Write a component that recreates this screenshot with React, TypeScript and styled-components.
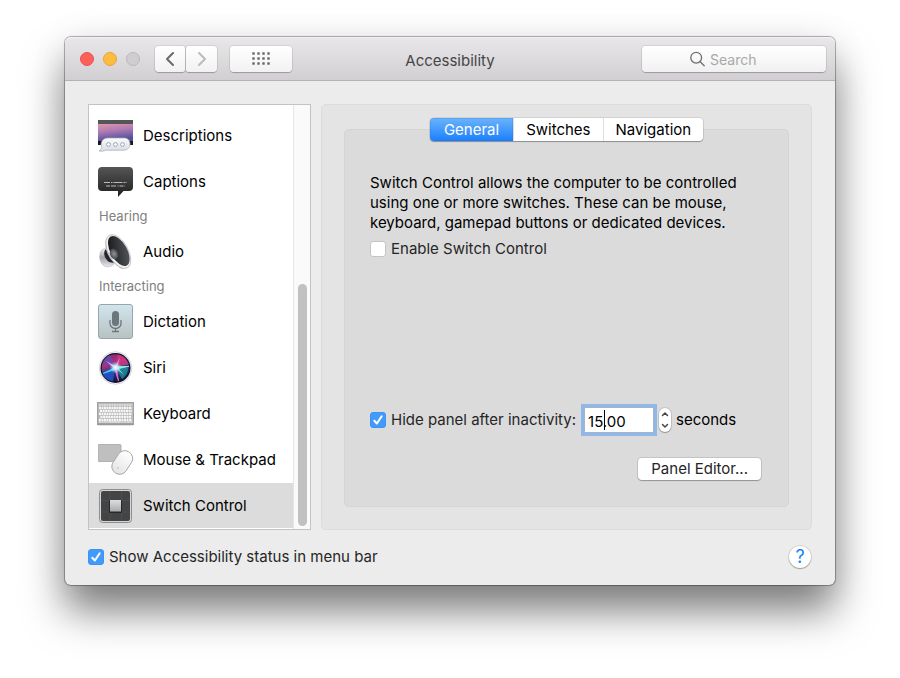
import React, { useId } from 'react';
import styled, { createGlobalStyle } from 'styled-components';

const GlobalStyle = createGlobalStyle`
  *, *::before, *::after { box-sizing: border-box; }
  body { margin: 0; background: #fff; color: #000; font: 400 15px/20px Inter, "Liberation Sans", sans-serif; }
  button, input { font: inherit; color: inherit; }
  svg { display: block; }
`;

const Desktop = styled.main`
  display: flex;
  flex-direction: column;
  min-height: 100vh;
  padding: 37px 65px 93px;
  background: #fff;
  overflow: hidden;
`;

const Window = styled.section`
  flex: 1;
  display: flex;
  flex-direction: column;
  border-radius: 6px;
  background: #ececec;
  box-shadow: 0 0 0 1px rgba(0, 0, 0, 0.24), 0 0 2px rgba(0, 0, 0, 0.25), 0 26px 40px rgba(0, 0, 0, 0.5), 0 0 40px rgba(0, 0, 0, 0.06);
`;

const TitleBar = styled.header`
  display: grid;
  grid-template-columns: 1fr auto 1fr;
  align-items: center;
  height: 44px;
  padding: 0 9px;
  border-radius: 6px 6px 0 0;
  border-bottom: 1px solid #b4b2b4;
  background: linear-gradient(#e9e7e9, #d1cfd1);
  box-shadow: inset 0 1px 0 #f3f2f3;
`;

const Title = styled.h1`
  margin: 0;
  padding-top: 4px;
  font-size: 15px;
  font-weight: 400;
  color: #464546;
`;

const ToolGroup = styled.div`
  display: flex;
  align-items: center;
  gap: 13px;
`;

const Lights = styled.div`
  display: flex;
  gap: 9px;
  padding: 0 2px 0 6px;
`;

const Light = styled.button<{ $fill: string; $ring: string }>`
  width: 14px;
  height: 14px;
  padding: 0;
  border: 1px solid ${(p) => p.$ring};
  border-radius: 50%;
  background: ${(p) => p.$fill};
`;

const NavPair = styled.div`
  display: flex;
  gap: 1px;
`;

const ToolButton = styled.button<{ $w: number; $corners?: string }>`
  display: grid;
  place-items: center;
  width: ${(p) => p.$w}px;
  height: 26px;
  padding: 0;
  border: 0;
  border-radius: ${(p) => p.$corners ?? '4px'};
  background: linear-gradient(#fff, #f3f2f3);
  box-shadow: 0 0 0 1px rgba(0, 0, 0, 0.07), 0 1px 1px rgba(0, 0, 0, 0.22);
`;

const SearchBox = styled.label`
  justify-self: end;
  display: flex;
  align-items: center;
  gap: 5px;
  width: 184px;
  height: 26px;
  padding-left: 48px;
  border-radius: 4px;
  background: linear-gradient(#fff, #f1f1f1);
  box-shadow: 0 0 0 1px rgba(0, 0, 0, 0.07), 0 1px 1px rgba(0, 0, 0, 0.22);
`;

const SearchInput = styled.input`
  flex: 1;
  min-width: 0;
  padding: 2px 0 0;
  border: 0;
  outline: 0;
  background: transparent;
  font-size: 14px;
  &::placeholder { color: #a9a9a9; opacity: 1; }
`;

const Body = styled.div`
  flex: 1;
  display: flex;
  flex-direction: column;
  padding: 23px 23px 16px;
`;

const Columns = styled.div`
  flex: 1;
  display: grid;
  grid-template-columns: 223px 1fr;
  gap: 10px;
`;

const Sidebar = styled.nav`
  display: grid;
  grid-template-columns: 1fr 17px;
  border: 1px solid #c3c3c3;
  background: #fff;
`;

const List = styled.div`
  padding-top: 8px;
`;

const GroupTitle = styled.h2`
  margin: 0;
  padding: 0 0 2px 10px;
  font-size: 13px;
  line-height: 22px;
  font-weight: 400;
  color: #808080;
`;

const Item = styled.button<{ $selected?: boolean }>`
  display: flex;
  align-items: center;
  gap: 9px;
  width: 100%;
  height: 46px;
  padding: 1px 9px 0;
  border: 0;
  border-bottom: 1px solid #fff;
  background: ${(p) => (p.$selected ? '#dcdcdc' : '#fff')};
  text-align: left;
`;

const ScrollTrack = styled.div`
  display: flex;
  flex-direction: column;
  justify-content: flex-end;
  padding: 3px;
  border-left: 1px solid #e6e6e6;
  background: #fafafa;
`;

const ScrollThumb = styled.div`
  width: 9px;
  height: 58%;
  margin-left: 1px;
  border-radius: 5px;
  background: #c1c1c1;
`;

const Panel = styled.section`
  display: flex;
  flex-direction: column;
  padding: 13px 22px 22px;
  border: 1px solid #dcdcdc;
  border-radius: 5px;
  background: #e4e4e4;
`;

const Tabs = styled.div`
  z-index: 1;
  align-self: center;
  display: flex;
  height: 23px;
  margin-bottom: -12px;
  border-radius: 4px;
  background: #fff;
  box-shadow: 0 0 0 1px rgba(0, 0, 0, 0.08), 0 1px 1px rgba(0, 0, 0, 0.3);
`;

const Tab = styled.button<{ $active?: boolean }>`
  padding: 0 12px;
  border: 0;
  border-left: 1px solid #dedede;
  background: transparent;
  &:first-child { border-left: 0; padding: 0 14px; }
  &:last-child { border-radius: 0 4px 4px 0; }
  ${(p) =>
    p.$active &&
    `
    border-radius: 4px 0 0 4px;
    background: linear-gradient(#6cb3fa, #1a80fe);
    box-shadow: inset 0 0 0 1px rgba(20, 110, 240, 0.2);
    color: #fff;
  `}
`;

const Group = styled.div`
  flex: 1;
  display: flex;
  flex-direction: column;
  padding: 43px 27px 26px 25px;
  border: 1px solid #d4d4d4;
  border-radius: 5px;
  background: #dbdbdb;
`;

const Intro = styled.p`
  max-width: 385px;
  margin: 0 0 6px;
`;

const CheckLabel = styled.label`
  align-self: flex-start;
  display: inline-flex;
  align-items: center;
  gap: 5px;
  color: #262626;
`;

const CheckCell = styled.span`
  display: grid;
  place-items: center;
  > * { grid-area: 1 / 1; }
  > svg { pointer-events: none; }
`;

const CheckInput = styled.input`
  appearance: none;
  width: 16px;
  height: 16px;
  margin: 0;
  border: 1px solid #c4c4c4;
  border-radius: 3px;
  background: #fff;
  &:checked { border-color: #3b93f5; background: #429bfb; }
  & + svg { visibility: hidden; }
  &:checked + svg { visibility: visible; }
`;

const DelayRow = styled.div`
  display: flex;
  align-items: center;
  height: 34px;
  margin-top: auto;
  ${CheckLabel} { align-self: center; }
`;

const Field = styled.div`
  position: relative;
  margin: 0 5px 0 8px;
`;

const DelayInput = styled.input`
  display: block;
  width: 70px;
  height: 26px;
  padding: 3px 3px 0;
  border: 1px solid #a9b4c4;
  border-radius: 0;
  outline: 0;
  background: #fff;
  box-shadow: 0 0 0 3px #8db8e9;
  caret-color: transparent;
`;

const Caret = styled.span`
  position: absolute;
  left: 20px;
  top: 3px;
  width: 1px;
  height: 20px;
  background: #000;
`;

const Stepper = styled.div`
  display: flex;
  flex-direction: column;
  width: 12px;
  margin-right: 5px;
  border-radius: 6px;
  background: #fff;
  box-shadow: 0 0 0 1px rgba(0, 0, 0, 0.1), 0 1px 1px rgba(0, 0, 0, 0.25);
`;

const StepButton = styled.button`
  display: grid;
  place-items: center;
  height: 12px;
  padding: 0;
  border: 0;
  background: transparent;
`;

const PushButton = styled.button`
  align-self: flex-end;
  height: 22px;
  margin-top: 21px;
  padding: 0 13px;
  border: 0;
  border-radius: 4px;
  background: #fff;
  box-shadow: 0 0 0 1px rgba(0, 0, 0, 0.1), 0 1px 1px rgba(0, 0, 0, 0.25);
  color: #262626;
`;

const Footer = styled.footer`
  display: flex;
  justify-content: space-between;
  align-items: center;
  height: 24px;
  margin-top: 15px;
  padding-right: 1px;
  ${CheckLabel} { align-self: center; }
`;

const HelpButton = styled.button`
  width: 22px;
  height: 22px;
  padding: 0;
  border: 0;
  border-radius: 50%;
  background: #fff;
  box-shadow: 0 0 0 1px rgba(0, 0, 0, 0.1), 0 1px 1px rgba(0, 0, 0, 0.25);
  color: #1482fb;
  font-size: 18px;
`;

function CheckBox({ label, checked }: { label: string; checked?: boolean }) {
  return (
    <CheckLabel>
      <CheckCell>
        <CheckInput type="checkbox" defaultChecked={checked} />
        <svg width="16" height="16" viewBox="0 0 16 16" fill="none" stroke="#fff" strokeWidth="2" strokeLinecap="round" strokeLinejoin="round">
          <path d="M4.3 8.7 6.9 11.5 11.7 4.3" />
        </svg>
      </CheckCell>
      {label}
    </CheckLabel>
  );
}

function DescriptionsIcon() {
  return (
    <svg width="36" height="36" viewBox="0 0 36 36">
      <defs>
        <linearGradient id="sky" x1="0" y1="0" x2="0.25" y2="1">
          <stop offset="0" stopColor="#e295a9" />
          <stop offset="0.45" stopColor="#b07bb4" />
          <stop offset="1" stopColor="#554f9b" />
        </linearGradient>
        <linearGradient id="bubble" x1="0" y1="0" x2="0" y2="1">
          <stop offset="0" stopColor="#fafbfc" />
          <stop offset="1" stopColor="#d9dce5" />
        </linearGradient>
      </defs>
      <path d="M0 2h35v25H0z" fill="#17181c" />
      <path d="M0 2h35v4H0z" fill="#525756" />
      <path d="M0 6h35v17H0z" fill="url(#sky)" />
      <path d="M10 20h16c4 0 6 2.600 6 6s-2.500 6.200-6 6.200H8c-2 .9-4.500 1.200-7 .8 1.500-.8 2.600-2 2.900-3.200C1.700 25 4.500 20 10 20z" fill="url(#bubble)" stroke="#a5a9b8" strokeWidth=".7" />
      <g fill="#fff" stroke="#a0a2ad" strokeWidth="1">
        <circle cx="10.500" cy="26.500" r="1.900" />
        <circle cx="17.500" cy="26.500" r="1.900" />
        <circle cx="24.500" cy="26.500" r="1.900" />
      </g>
    </svg>
  );
}

function CaptionsIcon() {
  return (
    <svg width="36" height="36" viewBox="0 0 36 36">
      <defs>
        <linearGradient id="caption" x1="0" y1="0" x2="0" y2="1">
          <stop offset="0" stopColor="#555" />
          <stop offset="1" stopColor="#1f1f1f" />
        </linearGradient>
      </defs>
      <path d="M4 3h27q4 0 4 4v16q0 4-4 4h-5.500L20 33v-6H4q-4 0-4-4V7q0-4 4-4z" fill="url(#caption)" />
      <g stroke="#bcbcbc" strokeWidth="1">
        <path d="M6 18.500h23" strokeDasharray="6 1 1.500 1 9 1 2 1" />
        <path d="M8 22h19" strokeDasharray="4 1 5 1.500 1 1" />
      </g>
    </svg>
  );
}

function AudioIcon() {
  return (
    <svg width="36" height="36" viewBox="0 0 36 36">
      <defs>
        <linearGradient id="magnet" x1="0" y1="0" x2="0" y2="1">
          <stop offset="0" stopColor="#f2f2f6" />
          <stop offset=".5" stopColor="#a3a3ae" />
          <stop offset="1" stopColor="#e9e9ee" />
        </linearGradient>
        <linearGradient id="cone" x1="0" y1="0" x2="1" y2="0.8">
          <stop offset="0" stopColor="#111" />
          <stop offset="1" stopColor="#55575a" />
        </linearGradient>
        <radialGradient id="dome">
          <stop offset="0" stopColor="#909599" />
          <stop offset="1" stopColor="#45484c" />
        </radialGradient>
      </defs>
      <path d="M3 17c2-3 6-3 8-1l5 14c-3 3-8 4-11 1-4-4-4-10-2-14z" fill="url(#magnet)" stroke="#a9a9b2" strokeWidth=".5" />
      <path d="M7 16l4-3 5 16-5-1C7 25 5 20 7 16z" fill="#25262a" />
      <path d="M8.500 4c-4 9 2 23 15 31l5-2C15 25 9 14 12 1z" fill="#c6c6ce" />
      <ellipse cx="20.300" cy="17.600" rx="9.800" ry="18.600" transform="rotate(-29 20.300 17.600)" fill="#f1f1f4" stroke="#aaaab1" strokeWidth=".6" />
      <ellipse cx="20.800" cy="17" rx="8.300" ry="16.600" transform="rotate(-29 20.800 17)" fill="url(#cone)" />
      <ellipse cx="16" cy="20" rx="4" ry="5.500" transform="rotate(-20 16 20)" fill="url(#dome)" />
    </svg>
  );
}

function DictationIcon() {
  return (
    <svg width="36" height="36" viewBox="0 0 36 36">
      <defs>
        <linearGradient id="dictation" x1="0" y1="0" x2="0" y2="1">
          <stop offset="0" stopColor="#d2e5ed" />
          <stop offset="1" stopColor="#b7c1c2" />
        </linearGradient>
      </defs>
      <rect x=".5" y=".5" width="34" height="34" rx="2.500" fill="url(#dictation)" stroke="#98a5a9" />
      <rect x="14" y="7" width="7" height="15" rx="3.500" fill="#6b777b" />
      <path d="M12 16v3.500a5.500 5 0 0 0 11 0V16M17.500 24.500V27M14 27.500h7" fill="none" stroke="#6b777b" strokeWidth="1.300" />
    </svg>
  );
}

function SiriIcon() {
  return (
    <svg width="36" height="36" viewBox="0 0 36 36">
      <defs>
        <linearGradient id="orb" x1="0.2" y1="0" x2="0.5" y2="1">
          <stop offset="0" stopColor="#7b2a6e" />
          <stop offset=".35" stopColor="#b0307f" />
          <stop offset=".6" stopColor="#2a3f92" />
          <stop offset="1" stopColor="#14123a" />
        </linearGradient>
        <radialGradient id="glow">
          <stop offset="0" stopColor="#fff" />
          <stop offset=".4" stopColor="#cdf3ff" stopOpacity=".8" />
          <stop offset="1" stopColor="#8fd8ff" stopOpacity="0" />
        </radialGradient>
      </defs>
      <circle cx="17.500" cy="18" r="16.300" fill="#f3f3f3" stroke="#cfcfcf" strokeWidth=".8" />
      <circle cx="17.500" cy="18" r="15" fill="#10102a" />
      <circle cx="17.500" cy="18" r="13.800" fill="url(#orb)" />
      <path d="M17 17 4.500 13C6 9 9 6 12 5z" fill="#5b54b5" opacity=".7" />
      <path d="M17 17 20 4.500c5 1 9 5 10.500 10z" fill="#d23a7c" opacity=".75" />
      <path d="M17 17 5 25c3 4 6 6 10 6.500z" fill="#2158d2" opacity=".8" />
      <path d="M17 17 30 18c0 5-3 9-6 11z" fill="#1aa29b" opacity=".7" />
      <path d="M17 17.500 5 23.500 17 19.500z" fill="#45d7ff" stroke="#45d7ff" strokeWidth=".8" />
      <path d="M17 16.500 31 16.500 18 19z" fill="#8ff5de" stroke="#8ff5de" strokeWidth=".8" />
      <path d="M16 17 20.500 31 18.500 17z" fill="#ff78d2" stroke="#f06ac8" strokeWidth=".8" />
      <path d="M16 18 8 11 18 16.500zM17 17 22 8 18.500 18z" fill="#f2b9ef" />
      <path d="M17 17 26 25 19 17z" fill="#b9fff0" />
      <circle cx="17.500" cy="17.500" r="6" fill="url(#glow)" />
    </svg>
  );
}

function KeyboardIcon() {
  return (
    <svg width="36" height="36" viewBox="1 0 36 36" overflow="visible">
      <rect x="0" y="8" width="37" height="21" fill="#c9c9c9" />
      <rect x=".5" y="6.500" width="36" height="21" fill="#b9b9b9" stroke="#a0a0a0" />
      <g stroke="#f8f8f8">
        <path d="M2 9h33" strokeWidth="1" strokeDasharray="2 .5" />
        <path d="M2 11.800h33M2 17.800h33M2 23.800h33" strokeWidth="2.200" strokeDasharray="1.900 .6" />
        <path d="M3 14.800h32M3.500 20.800h31" strokeWidth="2.200" strokeDasharray="2 .6" />
        <path d="M2 26h33" strokeWidth="1" strokeDasharray="2 .6 2 .6 3 .6 13 .6" />
      </g>
      <path d="M0 28.500h37" stroke="#989898" />
      <path d="M1 29.500h35" stroke="#e2e2e2" />
    </svg>
  );
}

function MouseIcon() {
  return (
    <svg width="36" height="36" viewBox="0 0 36 36">
      <defs>
        <linearGradient id="mouse" x1="0" y1="0" x2="0" y2="1">
          <stop offset="0" stopColor="#fff" />
          <stop offset="1" stopColor="#e4e4e4" />
        </linearGradient>
      </defs>
      <rect x="0" y="2.500" width="23" height="17" rx="1" fill="#bfbfbf" stroke="#a5a5a5" strokeWidth=".8" />
      <rect x="16.500" y="8" width="15.500" height="25" rx="7.500" transform="rotate(33 24.250 20.500)" fill="url(#mouse)" stroke="#a6a6a6" strokeWidth=".9" />
      <circle cx="20" cy="26" r="1" fill="#c9c9c9" />
    </svg>
  );
}

function SwitchIcon() {
  return (
    <svg width="36" height="36" viewBox="0 0 36 36">
      <defs>
        <linearGradient id="key" x1="0" y1="0" x2="0" y2="1">
          <stop offset="0" stopColor="#dedede" />
          <stop offset="1" stopColor="#a9a9a9" />
        </linearGradient>
      </defs>
      <rect x="1.500" y="1.500" width="32" height="33" rx="3" fill="#d6d6d6" stroke="#8d8d8d" />
      <rect x="3" y="3" width="29" height="30" rx="2" fill="#434446" />
      <path d="M12 3v30M23.500 3v30M3 12.500h29M3 24h29" stroke="#505154" strokeWidth=".8" />
      <rect x="11" y="12" width="13" height="13" fill="#29292a" />
      <rect x="12" y="12" width="11" height="11.500" fill="url(#key)" />
    </svg>
  );
}

function Chevron({ d, color, w, h, stroke }: { d: string; color: string; w: number; h: number; stroke: number }) {
  return (
    <svg width={w} height={h} viewBox={`0 0 ${w} ${h}`} fill="none" stroke={color} strokeWidth={stroke} strokeLinecap="round" strokeLinejoin="round">
      <path d={d} />
    </svg>
  );
}

const dots = [0, 1, 2].flatMap((row) => [0, 1, 2, 3].map((col) => ({ x: col * 5, y: row * 5 })));

export default function App() {
  const delayId = useId();
  return (
    <Desktop>
      <GlobalStyle />
      <Window aria-label="Accessibility">
        <TitleBar>
          <ToolGroup>
            <Lights>
              <Light aria-label="Close" $fill="#fc605b" $ring="#e9534e" />
              <Light aria-label="Minimize" $fill="#fdbc40" $ring="#e8a632" />
              <Light aria-label="Zoom" $fill="#cfcecf" $ring="#bab9ba" />
            </Lights>
            <NavPair>
              <ToolButton $w={30} $corners="4px 3px 3px 4px" aria-label="Back">
                <Chevron w={8} h={16} stroke={2} color="#6a6a6a" d="M7 2 1 8 7 14" />
              </ToolButton>
              <ToolButton $w={31} $corners="3px 4px 4px 3px" aria-label="Forward">
                <Chevron w={8} h={16} stroke={2} color="#bcbcbc" d="M1 2 7 8 1 14" />
              </ToolButton>
            </NavPair>
            <ToolButton $w={62} aria-label="Show All">
              <svg width="18" height="13" viewBox="0 0 18 13" fill="#666">
                {dots.map((d) => (
                  <rect key={`${d.x}-${d.y}`} x={d.x + 0.3} y={d.y + 0.3} width="2.400" height="2.400" />
                ))}
              </svg>
            </ToolButton>
          </ToolGroup>
          <Title>Accessibility</Title>
          <SearchBox>
            <svg width="15" height="16" viewBox="0 0 15 16" fill="none" stroke="#6f6f6f" strokeWidth="1.300" strokeLinecap="round">
              <circle cx="6.200" cy="6.700" r="5.400" />
              <path d="M10.200 10.700 14.200 14.700" />
            </svg>
            <SearchInput type="text" placeholder="Search" aria-label="Search" />
          </SearchBox>
        </TitleBar>
        <Body>
          <Columns>
            <Sidebar aria-label="Features">
              <List>
                <Item><DescriptionsIcon />Descriptions</Item>
                <Item><CaptionsIcon />Captions</Item>
                <GroupTitle>Hearing</GroupTitle>
                <Item><AudioIcon />Audio</Item>
                <GroupTitle>Interacting</GroupTitle>
                <Item><DictationIcon />Dictation</Item>
                <Item><SiriIcon />Siri</Item>
                <Item><KeyboardIcon />Keyboard</Item>
                <Item><MouseIcon />Mouse &amp; Trackpad</Item>
                <Item $selected aria-current="true"><SwitchIcon />Switch Control</Item>
              </List>
              <ScrollTrack>
                <ScrollThumb />
              </ScrollTrack>
            </Sidebar>
            <Panel>
              <Tabs role="tablist">
                <Tab role="tab" aria-selected="true" $active>General</Tab>
                <Tab role="tab" aria-selected="false">Switches</Tab>
                <Tab role="tab" aria-selected="false">Navigation</Tab>
              </Tabs>
              <Group role="tabpanel">
                <Intro>
                  Switch Control allows the computer to be controlled using one or more switches. These can be mouse, keyboard, gamepad buttons or dedicated devices.
                </Intro>
                <CheckBox label="Enable Switch Control" />
                <DelayRow>
                  <CheckBox label="Hide panel after inactivity:" checked />
                  <Field>
                    <DelayInput id={delayId} type="text" defaultValue="15.00" />
                    <Caret />
                  </Field>
                  <Stepper>
                    <StepButton aria-label="Increase">
                      <Chevron w={8} h={6} stroke={1.5} color="#444" d="M1.500 4.500 4 2 6.500 4.500" />
                    </StepButton>
                    <StepButton aria-label="Decrease">
                      <Chevron w={8} h={6} stroke={1.5} color="#444" d="M1.500 1.500 4 4 6.500 1.500" />
                    </StepButton>
                  </Stepper>
                  <label htmlFor={delayId}>seconds</label>
                </DelayRow>
                <PushButton>Panel Editor...</PushButton>
              </Group>
            </Panel>
          </Columns>
          <Footer>
            <CheckBox label="Show Accessibility status in menu bar" checked />
            <HelpButton aria-label="Help">?</HelpButton>
          </Footer>
        </Body>
      </Window>
    </Desktop>
  );
}
